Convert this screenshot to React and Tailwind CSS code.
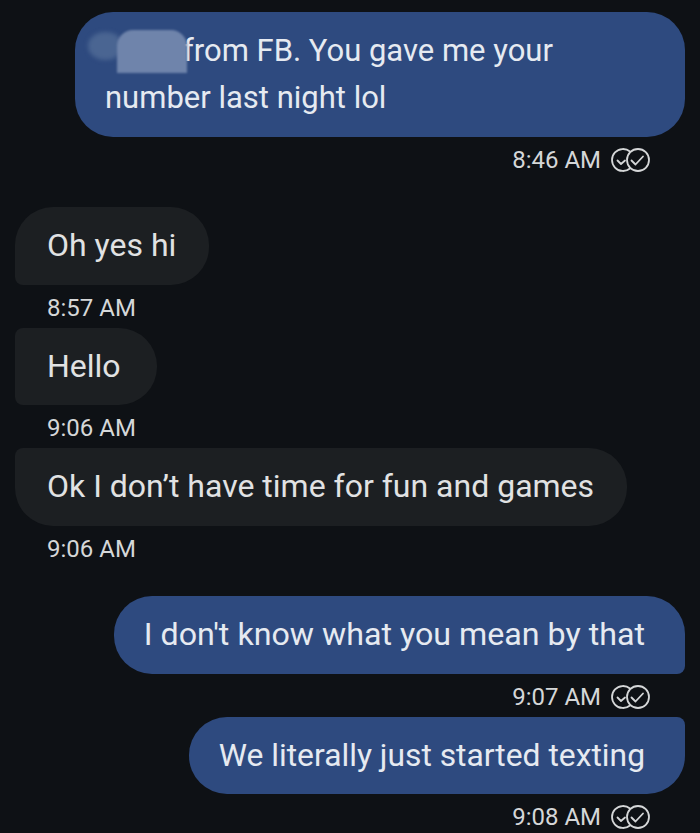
const FONT = "font-['Roboto',sans-serif]"

// Two overlapping circles with checks
function ReadIcon() {
  return (
    <svg width="40" height="26" viewBox="0 0 40 26" fill="none" stroke="#d5d7d8" strokeWidth="1.8" strokeLinecap="round" strokeLinejoin="round">
      <path d="M19 4.5A11 11 0 1 0 19 21.5" />
      <path d="M6.5 13.5l3.5 3.5 4-3.5" />
      <circle cx="27" cy="13" r="11" />
      <path d="M20.5 13.5l4 4 7.5-8" />
    </svg>
  )
}

function Sent({ children, time, corners, size = 'text-[32px]', width, mt }) {
  return (
    <div className={`flex flex-col items-end pr-[15px] ${mt}`}>
      <div className={`relative bg-[#2e4a7f] text-[#e6eaf1] leading-[47px] py-[15.25px] pl-[30px] pr-[40px] ${size} ${corners} ${width}`}>
        {children}
      </div>
      <div className="flex items-center h-[43px] pt-[3px] pr-[34px] text-[24px] text-[#d5d7d8] gap-[10px]">
        <span>{time}</span>
        <ReadIcon />
      </div>
    </div>
  )
}

function Received({ children, time, corners, mt }) {
  return (
    <div className={`flex flex-col items-start pl-[15px] ${mt}`}>
      <div className={`bg-[#1c1f22] text-[#e1e2e3] text-[32px] leading-[47px] py-[15.25px] pl-[32px] pr-[33px] ${corners}`}>
        {children}
      </div>
      <div className="flex items-center h-[43px] pt-[3px] pl-[32px] text-[24px] text-[#d5d7d8]">{time}</div>
    </div>
  )
}

export default function App() {
  return (
    <div className={`w-[700px] h-[833px] overflow-hidden bg-[#0e1115] pt-[12px] ${FONT}`}>
      <Sent time="8:46 AM" corners="rounded-[38px]" size="text-[31px]" width="w-[610px]">
        <div className="pl-[78px]">from FB. You gave me your</div>
        <div>number last night lol</div>
        {/* tachado del nombre */}
        <div className="absolute left-[13px] top-[20px] w-[35px] h-[28px] rounded-[50%] bg-[#4a6592] blur-[2px]" />
        <div className="absolute left-[42px] top-[18px] w-[70px] h-[43px] rounded-t-[16px] bg-[#6f84ab] blur-[1px]" />
      </Sent>

      <Received time="8:57 AM" corners="rounded-[38px] rounded-bl-[8px]" mt="mt-[27.5px]">Oh yes hi</Received>
      <Received time="9:06 AM" corners="w-[142px] rounded-[38px] rounded-tl-[8px] rounded-bl-[8px]">Hello</Received>
      <Received time="9:06 AM" corners="rounded-[38px] rounded-tl-[8px]">Ok I don’t have time for fun and games</Received>

      <Sent time="9:07 AM" corners="rounded-[38px] rounded-br-[8px]" size="text-[32.2px]" mt="mt-[27.5px]">I don't know what you mean by that</Sent>
      <Sent time="9:08 AM" corners="rounded-[38px] rounded-tr-[8px]" size="text-[31.8px]">We literally just started texting</Sent>
    </div>
  )
}
